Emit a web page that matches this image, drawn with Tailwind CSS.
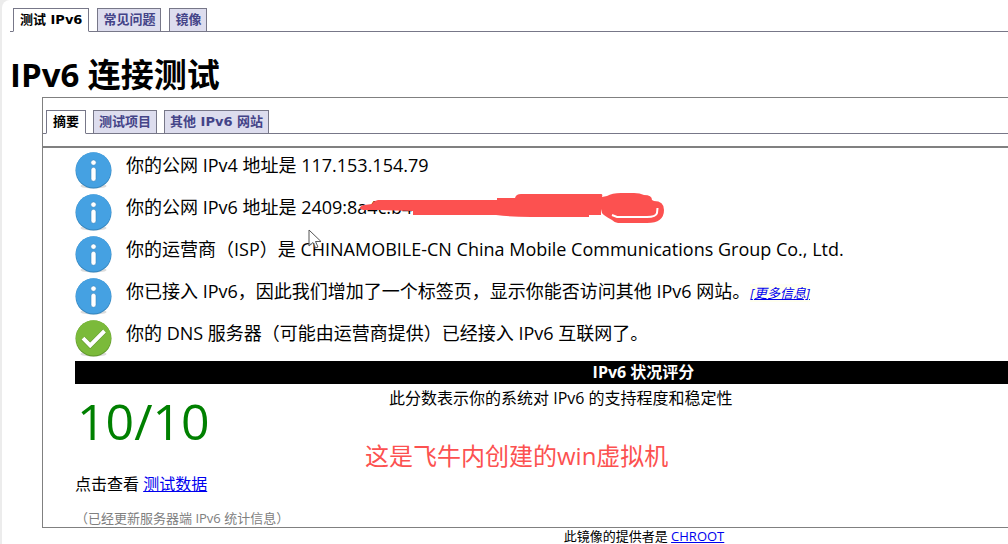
<!DOCTYPE html>
<html lang="zh-CN">
<head>
  <meta charset="UTF-8" />
  <meta name="viewport" content="width=device-width, initial-scale=1.0"/>
  <title>IPv6 连接测试</title>
  <script src="https://cdn.jsdelivr.net/npm/@tailwindcss/browser@4"></script>
</head>
<body class="bg-[#ececec] pl-[2px] overflow-x-hidden text-black font-['Open_Sans','Noto_Sans_CJK_SC',sans-serif]">

  <!-- shared icons -->
  <svg class="hidden">
    <symbol id="icon-info" viewBox="0 0 37 37">
      <ellipse cx="18.5" cy="34" rx="13" ry="2.5" fill="#dcdcdc"/>
      <circle cx="18.5" cy="18.5" r="18" fill="#3485bd"/>
      <circle cx="18.5" cy="17.9" r="17.6" fill="#45a1e2"/>
      <circle cx="18.5" cy="10.6" r="2.7" fill="#fff" stroke="#3b87bd" stroke-width=".6"/>
      <rect x="16" y="15.3" width="5" height="14" rx="2.5" fill="#fff" stroke="#3b87bd" stroke-width=".6"/>
    </symbol>
    <symbol id="icon-ok" viewBox="0 0 37 37">
      <ellipse cx="18.5" cy="34" rx="13" ry="2.5" fill="#dcdcdc"/>
      <circle cx="18.5" cy="18.5" r="18" fill="#5f962a"/>
      <circle cx="18.5" cy="17.9" r="17.6" fill="#7bba3a"/>
      <path d="M8 18.2l7.2 7.2L29.5 11" fill="none" stroke="#5c9228" stroke-width="5"/>
      <path d="M8 18.2l7.2 7.2L29.5 11" fill="none" stroke="#fff" stroke-width="4"/>
    </symbol>
  </svg>

  <div class="relative min-h-screen bg-white rounded-tl-lg pt-2 pl-2">

    <!-- top tabs -->
    <nav class="flex gap-2 pl-[3px] border-b border-[#777788] font-['DejaVu_Sans','Noto_Sans_CJK_SC',sans-serif] text-[13px] leading-[22px] font-bold">
      <a href="#" class="-mb-px border border-[#777788] border-b-white bg-white px-[6px]">测试 IPv6</a>
      <a href="#" class="border border-b-0 border-[#777788] bg-[#ddddee] text-[#444488] px-[5px]">常见问题</a>
      <a href="#" class="border border-b-0 border-[#777788] bg-[#ddddee] text-[#444488] px-[5px]">镜像</a>
    </nav>

    <h1 class="mt-[21px] text-[33px] leading-[44px] font-bold">IPv6 连接测试</h1>

    <main class="ml-8 border border-r-0 border-[#808080] pt-3">
      <nav class="flex gap-[7px] pl-[3px] border-b border-[#777788] font-['DejaVu_Sans','Noto_Sans_CJK_SC',sans-serif] text-[13px] leading-[22px] font-bold">
        <a href="#" class="-mb-px border border-[#777788] border-b-white bg-white px-[6px]">摘要</a>
        <a href="#" class="border border-b-0 border-[#777788] bg-[#ddddee] text-[#444488] px-[5px]">测试项目</a>
        <a href="#" class="border border-b-0 border-[#777788] bg-[#ddddee] text-[#444488] px-[5px]">其他 IPv6 网站</a>
      </nav>

      <section class="mt-3 border-t-2 border-[#808080] pl-8 pt-[3px]">
        <ul class="text-[18px] leading-[28px]">
          <li class="flex h-[42px] gap-[14px]">
            <svg class="w-[37px] h-[37px] mt-px shrink-0"><use href="#icon-info"/></svg>
            <span>你的公网 IPv4 地址是 117.153.154.79</span>
          </li>
          <li class="flex h-[42px] gap-[14px]">
            <svg class="w-[37px] h-[37px] mt-px shrink-0"><use href="#icon-info"/></svg>
            <span>你的公网 IPv6 地址是 2409:8a4c:b4</span>
          </li>
          <li class="flex h-[42px] gap-[14px]">
            <svg class="w-[37px] h-[37px] mt-px shrink-0"><use href="#icon-info"/></svg>
            <span>你的运营商（ISP）是 CHINAMOBILE-CN China Mobile Communications Group Co., Ltd.</span>
          </li>
          <li class="flex h-[42px] gap-[14px]">
            <svg class="w-[37px] h-[37px] mt-px shrink-0"><use href="#icon-info"/></svg>
            <span>你已接入 IPv6，因此我们增加了一个标签页，显示你能否访问其他 IPv6 网站。<a href="#" class="bg-[#fffff0] text-[13px] italic underline text-[#0000ee]">[更多信息]</a></span>
          </li>
          <li class="flex h-[42px] gap-[14px]">
            <svg class="w-[37px] h-[37px] mt-px shrink-0"><use href="#icon-ok"/></svg>
            <span>你的 DNS 服务器（可能由运营商提供）已经接入 IPv6 互联网了。</span>
          </li>
        </ul>

        <h2 class="bg-black text-white text-center text-[16px] leading-[23px] font-bold pl-[204px]">IPv6 状况评分</h2>

        <div class="flex text-[16px] leading-[28px]">
          <div class="w-[314px] text-[50px] leading-[74px] text-[#008000] pl-[2px]">10/10</div>
          <p>此分数表示你的系统对 IPv6 的支持程度和稳定性</p>
        </div>
        <p class="mt-3 text-[16px] leading-[28px]">点击查看 <a href="#" class="underline text-[#0000ee]">测试数据</a></p>
        <p class="mt-[11px] text-[13px] leading-[18px] text-[#808080]">（已经更新服务器端 IPv6 统计信息）</p>
      </section>
    </main>

    <footer class="text-center text-[13px] leading-[16px] pl-[270px]">此镜像的提供者是 <a href="#" class="underline text-[#0000ee]">CHROOT</a></footer>

    <!-- hand-drawn marks over the page -->
    <svg class="absolute left-[358px] top-[190px] w-[308px] h-[36px]" viewBox="360 190 308 36" fill="#fc5150">
      <path d="M360 209q-1-3 4-4l8-1q1-3 6-4h119v-2h18q1-4 6-4h80q2 0 1 3l5-1q5-3 14-3h13q6 0 10 2 8 0 8 5l2 1q10 0 10 9 0 13-17 13h-29q-3 0-6-3-9-5-10-7l-1-4v6h-12v2h-58q-20 0-35-2h-83v-4l-35-1h-13q-4 0-5-2z"/>
      <path d="M612 215l5 2h30q9 0 10-4l.5-5" fill="none" stroke="#fff" stroke-width="2"/>
    </svg>
    <svg class="absolute left-[306px] top-[229px] w-[14px] h-[20px]" viewBox="0 0 14 20">
      <path d="M1 1v16l4-3.500 2.500 5.500 2.500-1-2.500-5.500H13z" fill="#fff" fill-opacity=".7" stroke="#555" stroke-width="1"/>
    </svg>
    <p class="absolute left-[363px] top-[438px] text-[24px] leading-[36px] text-[#fc5150] whitespace-nowrap">这是飞牛内创建的win虚拟机</p>
  </div>
</body>
</html>
